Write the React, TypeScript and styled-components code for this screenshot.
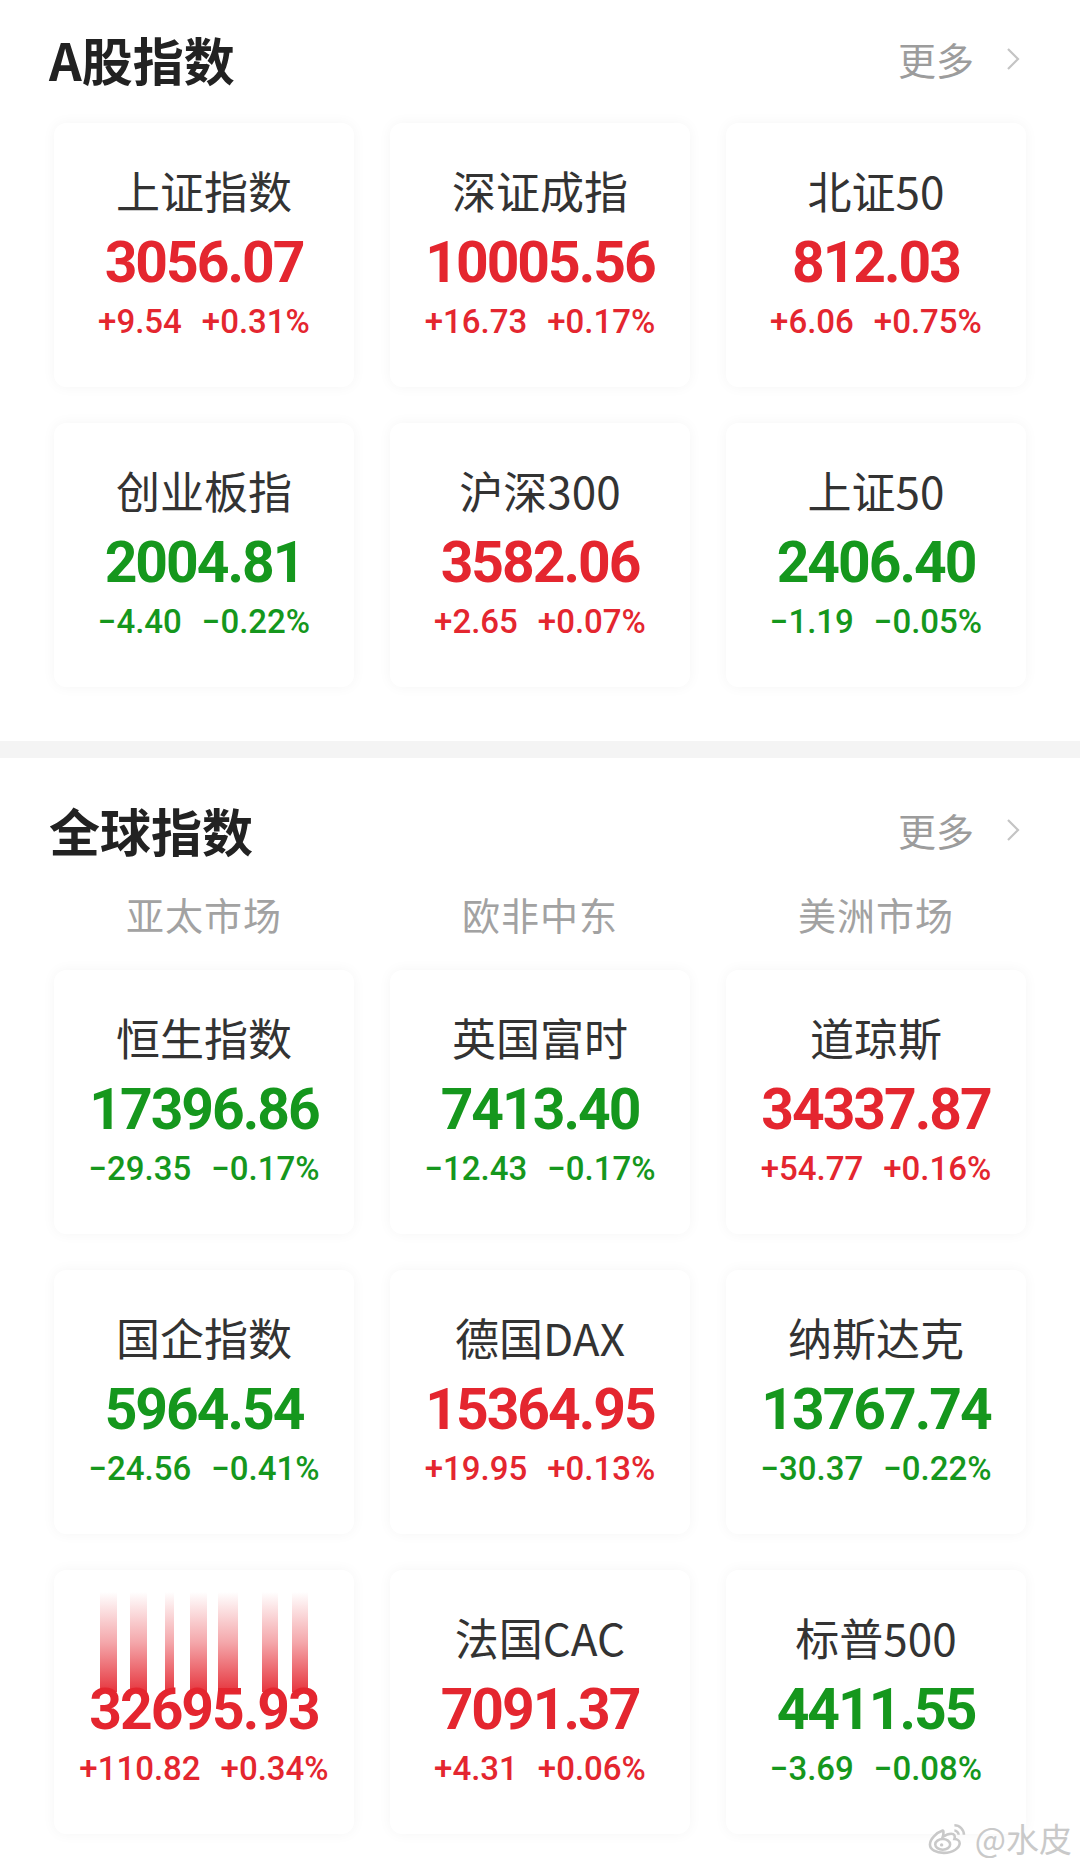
import * as React from 'react';
import styled, { createGlobalStyle } from 'styled-components';

const RED = '#e4262f';
const GREEN = '#15971d';

const GlobalStyle = createGlobalStyle`
  html, body {
    margin: 0;
    padding: 0;
    background: #fff;
  }
  body {
    font-family: "Noto Sans CJK SC", "Noto Sans", sans-serif;
  }
`

const Page = styled.div`
  position: relative;
  width: 1080px;
  height: 1868px;
  overflow: hidden;
  background: #fff;
`

const Section = styled.section<{ $bottom: number }>`
  padding: 0 0 ${p => p.$bottom}px;
`

const Header = styled.div<{ $top: number }>`
  display: flex;
  align-items: center;
  justify-content: space-between;
  padding: ${p => p.$top}px 60px 0 49px;
  height: 60px;
`

const Title = styled.h2`
  margin: 0;
  font-size: 51px;
  line-height: 60px;
  font-weight: 700;
  color: #222;
`

const More = styled.div`
  display: flex;
  align-items: center;
  gap: 32px;
  font-size: 38px;
  line-height: 60px;
  color: #9c9c9c;
`

const Band = styled.div`
  height: 17px;
  background: #f4f4f4;
`

const Grid = styled.div<{ $top: number }>`
  display: grid;
  grid-template-columns: repeat(3, 300px);
  column-gap: 36px;
  row-gap: 36px;
  padding: 0 54px;
  margin-top: ${p => p.$top}px;
`

const Tabs = styled.div`
  display: grid;
  grid-template-columns: repeat(3, 300px);
  column-gap: 36px;
  padding: 0 54px;
  margin-top: 29px;
`

const Tab = styled.div`
  text-align: center;
  font-size: 38px;
  line-height: 50px;
  color: #a2a2a2;
  letter-spacing: 1px;
`

const Card = styled.div`
  position: relative;
  height: 264px;
  border-radius: 12px;
  background: #fff;
  box-shadow: 0 0 14px rgba(0, 0, 0, 0.045);
  display: flex;
  flex-direction: column;
  align-items: center;
  padding-top: 41px;
  box-sizing: border-box;
`

const Name = styled.div`
  height: 52px;
  font-size: 44px;
  line-height: 52px;
  color: #333;
  white-space: nowrap;
`

const Value = styled.div<{ $up: boolean }>`
  margin-top: 15px;
  font-family: "Roboto", "Liberation Sans", sans-serif;
  font-weight: 700;
  font-size: 57px;
  line-height: 64px;
  letter-spacing: -2px;
  color: ${p => (p.$up ? RED : GREEN)};
`

const Change = styled.div<{ $up: boolean }>`
  margin-top: 7px;
  display: flex;
  gap: 20px;
  font-family: "Roboto", "Liberation Sans", sans-serif;
  font-weight: 500;
  font-size: 33px;
  line-height: 40px;
  color: ${p => (p.$up ? RED : GREEN)};
`

const Stripe = styled.span<{ $left: number; $w: number }>`
  position: absolute;
  top: 22px;
  left: ${p => p.$left}px;
  width: ${p => p.$w}px;
  height: 100px;
  background: linear-gradient(to bottom, rgba(228, 37, 46, 0), rgba(228, 37, 46, 0.4) 50%, rgba(228, 37, 46, 0.92));
`

const Watermark = styled.div`
  position: absolute;
  right: 8px;
  bottom: 10px;
  display: flex;
  align-items: center;
  gap: 6px;
  font-size: 33px;
  line-height: 40px;
  color: #c9c9c9;
  text-shadow: 0 0 2px #fff, 0 0 2px #fff;
`

type Quote = {
  name: string;
  value: string;
  diff: string;
  pct: string;
  glitch?: boolean;
};

const aShares: Quote[] = [
  { name: '上证指数', value: '3056.07', diff: '+9.54', pct: '+0.31%' },
  { name: '深证成指', value: '10005.56', diff: '+16.73', pct: '+0.17%' },
  { name: '北证50', value: '812.03', diff: '+6.06', pct: '+0.75%' },
  { name: '创业板指', value: '2004.81', diff: '−4.40', pct: '−0.22%' },
  { name: '沪深300', value: '3582.06', diff: '+2.65', pct: '+0.07%' },
  { name: '上证50', value: '2406.40', diff: '−1.19', pct: '−0.05%' },
];

const globalIdx: Quote[] = [
  { name: '恒生指数', value: '17396.86', diff: '−29.35', pct: '−0.17%' },
  { name: '英国富时', value: '7413.40', diff: '−12.43', pct: '−0.17%' },
  { name: '道琼斯', value: '34337.87', diff: '+54.77', pct: '+0.16%' },
  { name: '国企指数', value: '5964.54', diff: '−24.56', pct: '−0.41%' },
  { name: '德国DAX', value: '15364.95', diff: '+19.95', pct: '+0.13%' },
  { name: '纳斯达克', value: '13767.74', diff: '−30.37', pct: '−0.22%' },
  { name: '', value: '32695.93', diff: '+110.82', pct: '+0.34%', glitch: true },
  { name: '法国CAC', value: '7091.37', diff: '+4.31', pct: '+0.06%' },
  { name: '标普500', value: '4411.55', diff: '−3.69', pct: '−0.08%' },
];

// the red streaks over the 5th-row card in the screenshot
const stripes: [number, number][] = [
  [46, 17], [76, 17], [111, 9], [136, 17], [164, 20], [208, 16], [238, 16],
];

const Chevron = () => (
  <svg width="14" height="24" viewBox="0 0 14 24">
    <polyline points="2,2 12,12 2,22" fill="none" stroke="#c4c4c4" strokeWidth="2.2" />
  </svg>
);

const WeiboLogo = () => (
  <svg width="42" height="34" viewBox="0 0 38 32" fill="none" stroke="#c9c9c9" strokeWidth="2.4">
    <path d="M14 9c-6 2-12 8-12 13 0 5 6 8 13 8 9 0 15-5 15-9 0-3-3-4-5-4 1-3 0-5-3-5-2 0-5 1-8 3 1-3 1-6 0-6z" fill="#fff" />
    <ellipse cx="14" cy="22" rx="7" ry="5" />
    <circle cx="13" cy="22.5" r="1.6" fill="#c9c9c9" stroke="none" />
    <path d="M25 4c5 0 9 4 9 9" />
    <path d="M25 9c2 0 4 2 4 4" />
  </svg>
);

const QuoteCard: React.FC<{ q: Quote }> = ({ q }) => {
  const up = q.diff.startsWith('+');
  return (
    <Card>
      {q.glitch && stripes.map(([l, w]) => <Stripe key={l} $left={l} $w={w} />)}
      <Name>{q.name}</Name>
      <Value $up={up}>{q.value}</Value>
      <Change $up={up}>
        <span>{q.diff}</span>
        <span>{q.pct}</span>
      </Change>
    </Card>
  );
};

const MoreLink = () => (
  <More>
    更多
    <Chevron />
  </More>
);

export default function App() {
  return (
    <Page>
      <GlobalStyle />
      <Section $bottom={54}>
        <Header $top={29}>
          <Title>A股指数</Title>
          <MoreLink />
        </Header>
        <Grid $top={34}>
          {aShares.map(q => <QuoteCard key={q.name} q={q} />)}
        </Grid>
      </Section>
      <Band />
      <Section $bottom={0}>
        <Header $top={42}>
          <Title>全球指数</Title>
          <MoreLink />
        </Header>
        <Tabs>
          <Tab>亚太市场</Tab>
          <Tab>欧非中东</Tab>
          <Tab>美洲市场</Tab>
        </Tabs>
        <Grid $top={31}>
          {globalIdx.map(q => <QuoteCard key={q.value} q={q} />)}
        </Grid>
      </Section>
      <Watermark>
        <WeiboLogo />
        @水皮
      </Watermark>
    </Page>
  );
}
